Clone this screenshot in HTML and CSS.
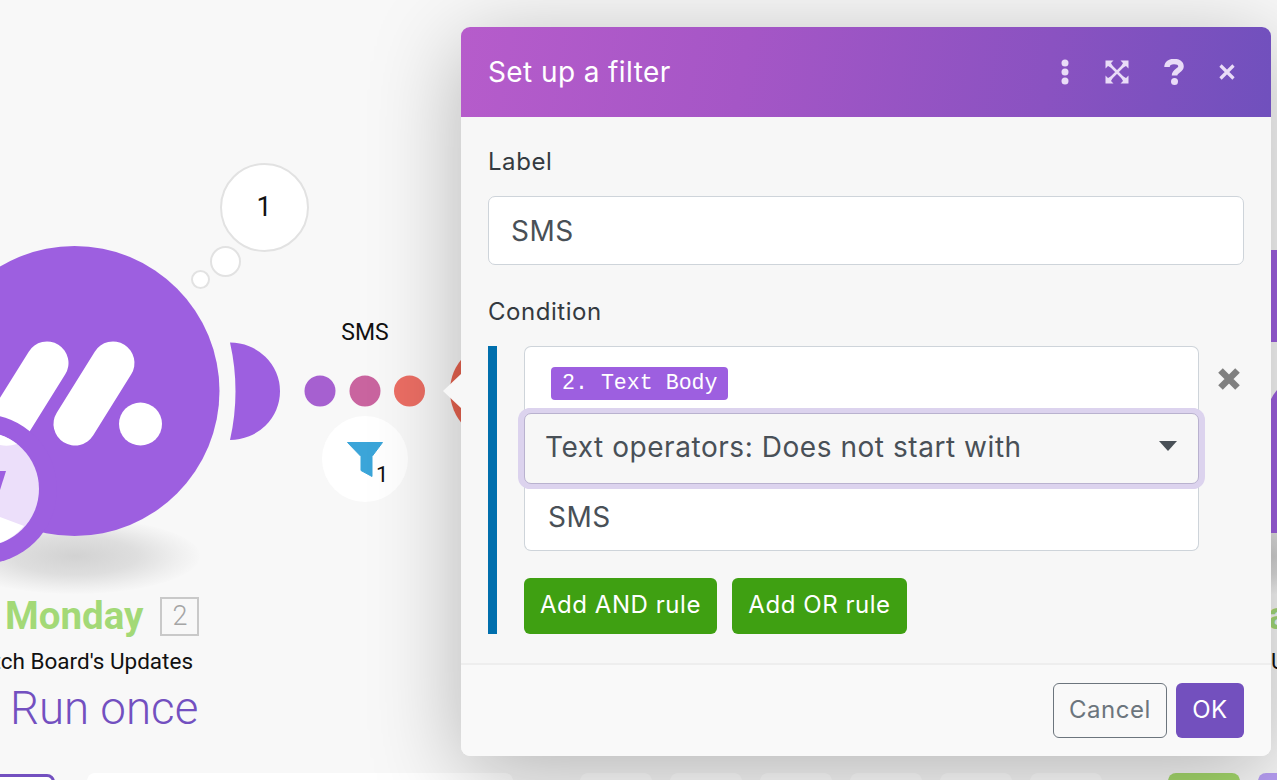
FILE: index.html
```html
<!DOCTYPE html>
<html lang="en">
<head>
<meta charset="utf-8">
<title>Set up a filter</title>
<link rel="stylesheet" href="styles.css">
</head>
<body>
<div class="canvas">
  <div class="node-shadow"></div>
  <div class="right-shadow"></div>

  <svg class="scene" width="1277" height="780" viewBox="0 0 1277 780" aria-hidden="true">
    <circle class="purple" cx="74.5" cy="391" r="145"/>
    <path class="purple" d="M230 342.5A50 48.750 0 0 1 230 440Q241 391 230 342.500Z"/>
    <line class="pill" x1="47" y1="363" x2="9" y2="424"/>
    <line class="pill" x1="113" y1="363" x2="75" y2="424"/>
    <circle class="white" cx="140.500" cy="424" r="21.500"/>
    <circle class="purple" cx="-18" cy="489" r="75"/>
    <circle class="lilac" cx="-18" cy="489" r="57"/>
    <path class="white" d="M-2 434A57 57 0 0 1 17 444Q8 447 0 445Z"/>
    <path class="white" d="M0 517L24 526A57 57 0 0 1 -18 546L-18 517Z"/>
    <path class="purple" d="M-8 471L6 471L0 490Z"/>
    <circle class="dot-a" cx="320" cy="391" r="15.500"/>
    <circle class="dot-b" cx="365" cy="391" r="15.500"/>
    <circle class="dot-c" cx="409.500" cy="391" r="15.500"/>
    <circle class="red" cx="500" cy="391" r="50"/>
    <circle class="filter-disc" cx="365" cy="459" r="43"/>
    <path class="funnel" d="M347.500 442.500H382.500L372 456.500V476.500L361 470.500V456.500Z"/>
    <rect class="purple" x="1268" y="250" width="9" height="92"/>
    <path class="purple" d="M1277 390Q1271 397 1268 406V533H1277Z"/>
  </svg>

  <div class="bubble bubble-lg">1</div>
  <div class="bubble bubble-md"></div>
  <div class="bubble bubble-sm"></div>

  <div class="route-label">SMS</div>
  <div class="filter-count">1</div>

  <div class="module-title">
    <span class="module-name">Monday</span>
    <span class="module-id">2</span>
  </div>
  <div class="module-sub">Watch Board's Updates</div>
  <div class="run-once">Run once</div>
  <div class="next-title">a</div>
  <div class="next-sub">U</div>

  <div class="toolbar">
    <div class="tool-outline"></div>
    <div class="tool-search"></div>
    <div class="tool-group">
      <div class="tool"></div>
      <div class="tool"></div>
      <div class="tool"></div>
      <div class="tool"></div>
      <div class="tool"></div>
      <div class="tool"></div>
    </div>
    <div class="tool tool-green"></div>
    <div class="tool tool-violet"></div>
  </div>

  <div class="modal">
    <div class="pointer"></div>
    <header class="modal-head">
      <h1 class="modal-title">Set up a filter</h1>
      <div class="head-icons">
        <svg class="icon" width="14" height="28" viewBox="0 0 14 28"><g class="icon-fill"><circle cx="7" cy="5" r="3.500"/><circle cx="7" cy="14" r="3.500"/><circle cx="7" cy="23" r="3.500"/></g></svg>
        <svg class="icon" width="24" height="24" viewBox="0 0 24 24"><g class="icon-line"><path d="M3 3L21 21M21 3L3 21"/></g><g class="icon-fill"><path d="M0.500 0.500H8.500L6 3L8 7L7 8L3 6L0.500 8.500Z"/><path d="M23.500 0.500H15.500L18 3L16 7L17 8L21 6L23.500 8.500Z"/><path d="M0.500 23.500H8.500L6 21L8 17L7 16L3 18L0.500 15.500Z"/><path d="M23.500 23.500H15.500L18 21L16 17L17 16L21 18L23.500 15.500Z"/></g></svg>
        <svg class="icon" width="20" height="26" viewBox="0 0 20 26"><path class="icon-q" d="M3 8C3 4.500 6 2.500 10 2.500C14 2.500 17 4.500 17 7.500C17 11.500 10.500 11.500 10.500 16.500"/><circle class="icon-dot" cx="10.500" cy="22.500" r="3.500"/></svg>
        <svg class="icon" width="18" height="18" viewBox="0 0 18 18"><path class="icon-x" d="M2.500 2.500L15.500 15.500M15.500 2.500L2.500 15.500"/></svg>
      </div>
    </header>

    <div class="modal-body">
      <div class="form-block">
        <div class="field-label">Label</div>
        <div class="text-input">SMS</div>
      </div>
      <div class="form-block block-condition">
        <div class="field-label">Condition</div>
        <div class="rule-group">
          <div class="rule">
            <div class="rule-fields">
              <div class="operand operand-top"><span class="tag">2. Text Body</span></div>
              <div class="operator">
                <span>Text operators: Does not start with</span>
                <span class="caret"></span>
              </div>
              <div class="operand operand-bottom">SMS</div>
            </div>
            <svg class="remove" width="24" height="24" viewBox="0 0 24 24"><path d="M3.500 3.500L20.500 20.500M20.500 3.500L3.500 20.500"/></svg>
          </div>
          <div class="rule-actions">
            <button class="btn btn-green btn-and" type="button">Add AND rule</button>
            <button class="btn btn-green btn-or" type="button">Add OR rule</button>
          </div>
        </div>
      </div>
    </div>

    <footer class="modal-foot">
      <button class="btn btn-cancel" type="button">Cancel</button>
      <button class="btn btn-ok" type="button">OK</button>
    </footer>
  </div>
</div>
</body>
</html>
```
FILE: styles.css
```css
* { box-sizing: border-box; }
html, body { margin: 0; padding: 0; }
body { background: #f7f7f7; font-family: Inter, "Liberation Sans", sans-serif; }

.canvas {
  position: relative;
  width: 1277px;
  height: 780px;
  overflow: hidden;
  background: #f8f8f8;
}

/* free canvas: scenario nodes */
.scene { position: absolute; left: 0; top: 0; }
.purple { fill: #9d5fe0; }
.white { fill: #fff; }
.lilac { fill: #ecdffa; }
.pill { stroke: #fff; stroke-width: 43; stroke-linecap: round; }
.dot-a { fill: #a660d0; }
.dot-b { fill: #c9649f; }
.dot-c { fill: #ec6e64; }
.red { fill: #e8634f; }
.filter-disc { fill: #fff; }
.funnel { fill: #3ba5d9; stroke: #3ba5d9; stroke-width: 1; stroke-linejoin: round; }

.node-shadow,
.right-shadow {
  position: absolute;
  top: 518px;
  width: 250px;
  height: 76px;
  border-radius: 50%;
  background: radial-gradient(ellipse at center, #d2d2d2 0%, #dedede 35%, #efefef 58%, rgba(248, 248, 248, 0) 72%);
}
.node-shadow { left: -50px; }
.right-shadow { left: 1145px; }

.bubble {
  position: absolute;
  display: flex;
  align-items: center;
  justify-content: center;
  background: #fff;
  border: 2px solid #e2e2e2;
  border-radius: 50%;
  font: 400 27px Roboto, sans-serif;
  color: #111;
}
.bubble-lg { left: 219.500px; top: 163px; width: 89px; height: 89px; padding-bottom: 2px; }
.bubble-md { left: 210px; top: 246px; width: 31px; height: 31px; }
.bubble-sm { left: 191px; top: 269.500px; width: 19px; height: 19px; }

.route-label {
  position: absolute;
  left: 325px;
  top: 320px;
  width: 80px;
  text-align: center;
  font: 400 23px/26px Roboto, sans-serif;
  color: #111;
}
.filter-count {
  position: absolute;
  left: 376px;
  top: 463px;
  font: 400 22px/24px Roboto, sans-serif;
  color: #111;
}

.module-title {
  position: absolute;
  left: 5px;
  top: 597px;
  display: flex;
  align-items: center;
  gap: 17px;
  height: 38px;
}
.module-name {
  font: 700 38.500px/38px Roboto, sans-serif;
  color: #a3d977;
}
.module-id {
  width: 39px;
  height: 39px;
  display: flex;
  align-items: center;
  justify-content: center;
  border: 2px solid #c9c9c9;
  font: 300 27px Roboto, sans-serif;
  color: #a5a5a5;
}
.module-sub {
  position: absolute;
  right: 1084px;
  top: 647px;
  white-space: nowrap;
  font: 400 22.500px/28px Roboto, sans-serif;
  color: #111;
}
.run-once {
  position: absolute;
  left: 10px;
  top: 683px;
  font: 300 45.700px/52px Roboto, sans-serif;
  color: #7350c0;
}
.next-title {
  position: absolute;
  left: 1268px;
  top: 597px;
  font: 700 38.500px/38px Roboto, sans-serif;
  color: #a3d977;
}
.next-sub {
  position: absolute;
  left: 1271px;
  top: 647px;
  font: 400 22.500px/28px Roboto, sans-serif;
  color: #111;
}

.toolbar {
  position: absolute;
  left: -40px;
  top: 773px;
  display: flex;
  height: 40px;
}
.tool-outline {
  width: 95px;
  height: 40px;
  margin-top: 1px;
  margin-right: 32px;
  border: 3px solid #7350c0;
  border-radius: 8px;
  background: #fff;
}
.tool-search {
  width: 426px;
  margin-right: 67px;
  border-radius: 8px;
  background: #fff;
}
.tool-group {
  display: flex;
  gap: 18px;
  margin-right: 66px;
}
.tool {
  width: 72px;
  border-radius: 8px;
  background: #fff;
}
.tool-green { background: #a5d96c; margin-right: 18px; }
.tool-violet { background: #b89ff5; }

/* dialog */
.modal {
  position: absolute;
  left: 461px;
  top: 27px;
  width: 810px;
  height: 729px;
  display: flex;
  flex-direction: column;
  background: #f7f7f7;
  border-radius: 9px;
  box-shadow: 0 18px 90px rgba(0, 0, 0, 0.28);
  letter-spacing: 0.55px;
}
.pointer {
  position: absolute;
  left: -18px;
  top: 347px;
  width: 0;
  height: 0;
  border-top: 17px solid transparent;
  border-bottom: 17px solid transparent;
  border-right: 18px solid #f7f7f7;
}
.modal-head {
  flex: none;
  height: 90px;
  padding: 0 35px 0 27px;
  display: flex;
  align-items: center;
  justify-content: space-between;
  border-radius: 9px 9px 0 0;
  background: linear-gradient(100deg, #b65ccb 0%, #a556c6 35%, #8a52c1 72%, #7050bd 100%);
}
.modal-title {
  margin: 0;
  font-size: 28px;
  font-weight: 400;
  line-height: 34px;
  letter-spacing: 0.4px;
  color: #fff;
}
.head-icons {
  display: flex;
  align-items: center;
}
.icon { display: block; flex: none; }
.icon-fill { fill: #e9dcf7; }
.icon-line { stroke: #e9dcf7; stroke-width: 2.500; fill: none; }
.icon-q { fill: none; stroke: #e9dcf7; stroke-width: 5.500; }
.icon-dot { fill: #e9dcf7; }
.icon-x { fill: none; stroke: #e9dcf7; stroke-width: 3.200; }
.head-icons .icon:nth-child(1) { margin-right: 33px; }
.head-icons .icon:nth-child(2) { margin-right: 35px; }
.head-icons .icon:nth-child(3) { margin-right: 34px; }

.modal-body {
  flex: 1;
  padding: 29px 27px 0;
  display: flex;
  flex-direction: column;
}
.field-label {
  font-size: 24px;
  line-height: 32px;
  color: #343a40;
}
.text-input {
  margin-top: 18px;
  height: 69px;
  padding: 0 22px;
  display: flex;
  align-items: center;
  background: #fff;
  border: 1px solid #ced4da;
  border-radius: 7px;
  font-size: 28px;
  color: #495057;
}
.block-condition { margin-top: 31px; }
.rule-group {
  margin-top: 18px;
  height: 288px;
  padding-left: 27px;
  border-left: 9px solid #006fad;
  display: flex;
  flex-direction: column;
}
.rule {
  display: flex;
  align-items: flex-start;
}
.rule-fields {
  width: 675px;
  display: flex;
  flex-direction: column;
}
.operand {
  background: #fff;
  border: 1px solid #ced4da;
}
.operand-top {
  height: 68px;
  padding: 20px 0 0 26px;
  border-radius: 7px 7px 0 0;
  border-bottom: 0;
}
.operand-bottom {
  height: 68px;
  margin-top: -1px;
  padding: 0 23px;
  display: flex;
  align-items: center;
  border-radius: 0 0 7px 7px;
  border-top: 0;
  font-size: 28px;
  color: #495057;
}
.tag {
  display: block;
  width: 177px;
  height: 33px;
  padding-left: 11px;
  border-radius: 4px;
  background: #9d5fe0;
  font: 400 21.600px/33px "Liberation Mono", monospace;
  letter-spacing: 0;
  color: #fff;
}
.operator {
  position: relative;
  height: 71px;
  margin-top: -1px;
  padding: 0 21px 4px 20px;
  display: flex;
  align-items: center;
  justify-content: space-between;
  background: #f7f7f7;
  border: 1px solid #b9b2cf;
  border-radius: 7px;
  box-shadow: 0 0 0 5px #dcd3ee, -1px 0 0 5px #dcd3ee, 1px 0 0 5px #dcd3ee;
  font-size: 28px;
  color: #495057;
}
.caret {
  width: 0;
  height: 0;
  border-left: 9px solid transparent;
  border-right: 9px solid transparent;
  border-top: 10px solid #495057;
  margin-top: -2px;
}
.remove {
  flex: none;
  margin: 21px 0 0 18px;
}
.remove path {
  fill: none;
  stroke: #808080;
  stroke-width: 6.500;
}
.rule-actions {
  margin-top: 27px;
  display: flex;
  gap: 15px;
}
.btn {
  margin: 0;
  height: 56px;
  padding: 0;
  border: 0;
  border-radius: 6px;
  font-family: Inter, "Liberation Sans", sans-serif;
  font-size: 24px;
  font-weight: 400;
  letter-spacing: 0.55px;
}
.btn-green { background: #3fa012; color: #fff; padding-bottom: 3px; }
.btn-and { width: 193px; }
.btn-or { width: 175px; }
.modal-foot {
  flex: none;
  height: 93px;
  padding: 18px 27px 0;
  display: flex;
  justify-content: flex-end;
  gap: 9px;
  background: #f9f9f9;
  border-top: 2px solid #eeeeee;
  border-radius: 0 0 9px 9px;
}
.btn-cancel {
  width: 114px;
  height: 55px;
  padding-bottom: 3px;
  background: transparent;
  border: 1px solid #6c757d;
  color: #6c757d;
}
.btn-ok {
  width: 68px;
  height: 55px;
  padding-bottom: 3px;
  background: #7350be;
  color: #fff;
}
```
